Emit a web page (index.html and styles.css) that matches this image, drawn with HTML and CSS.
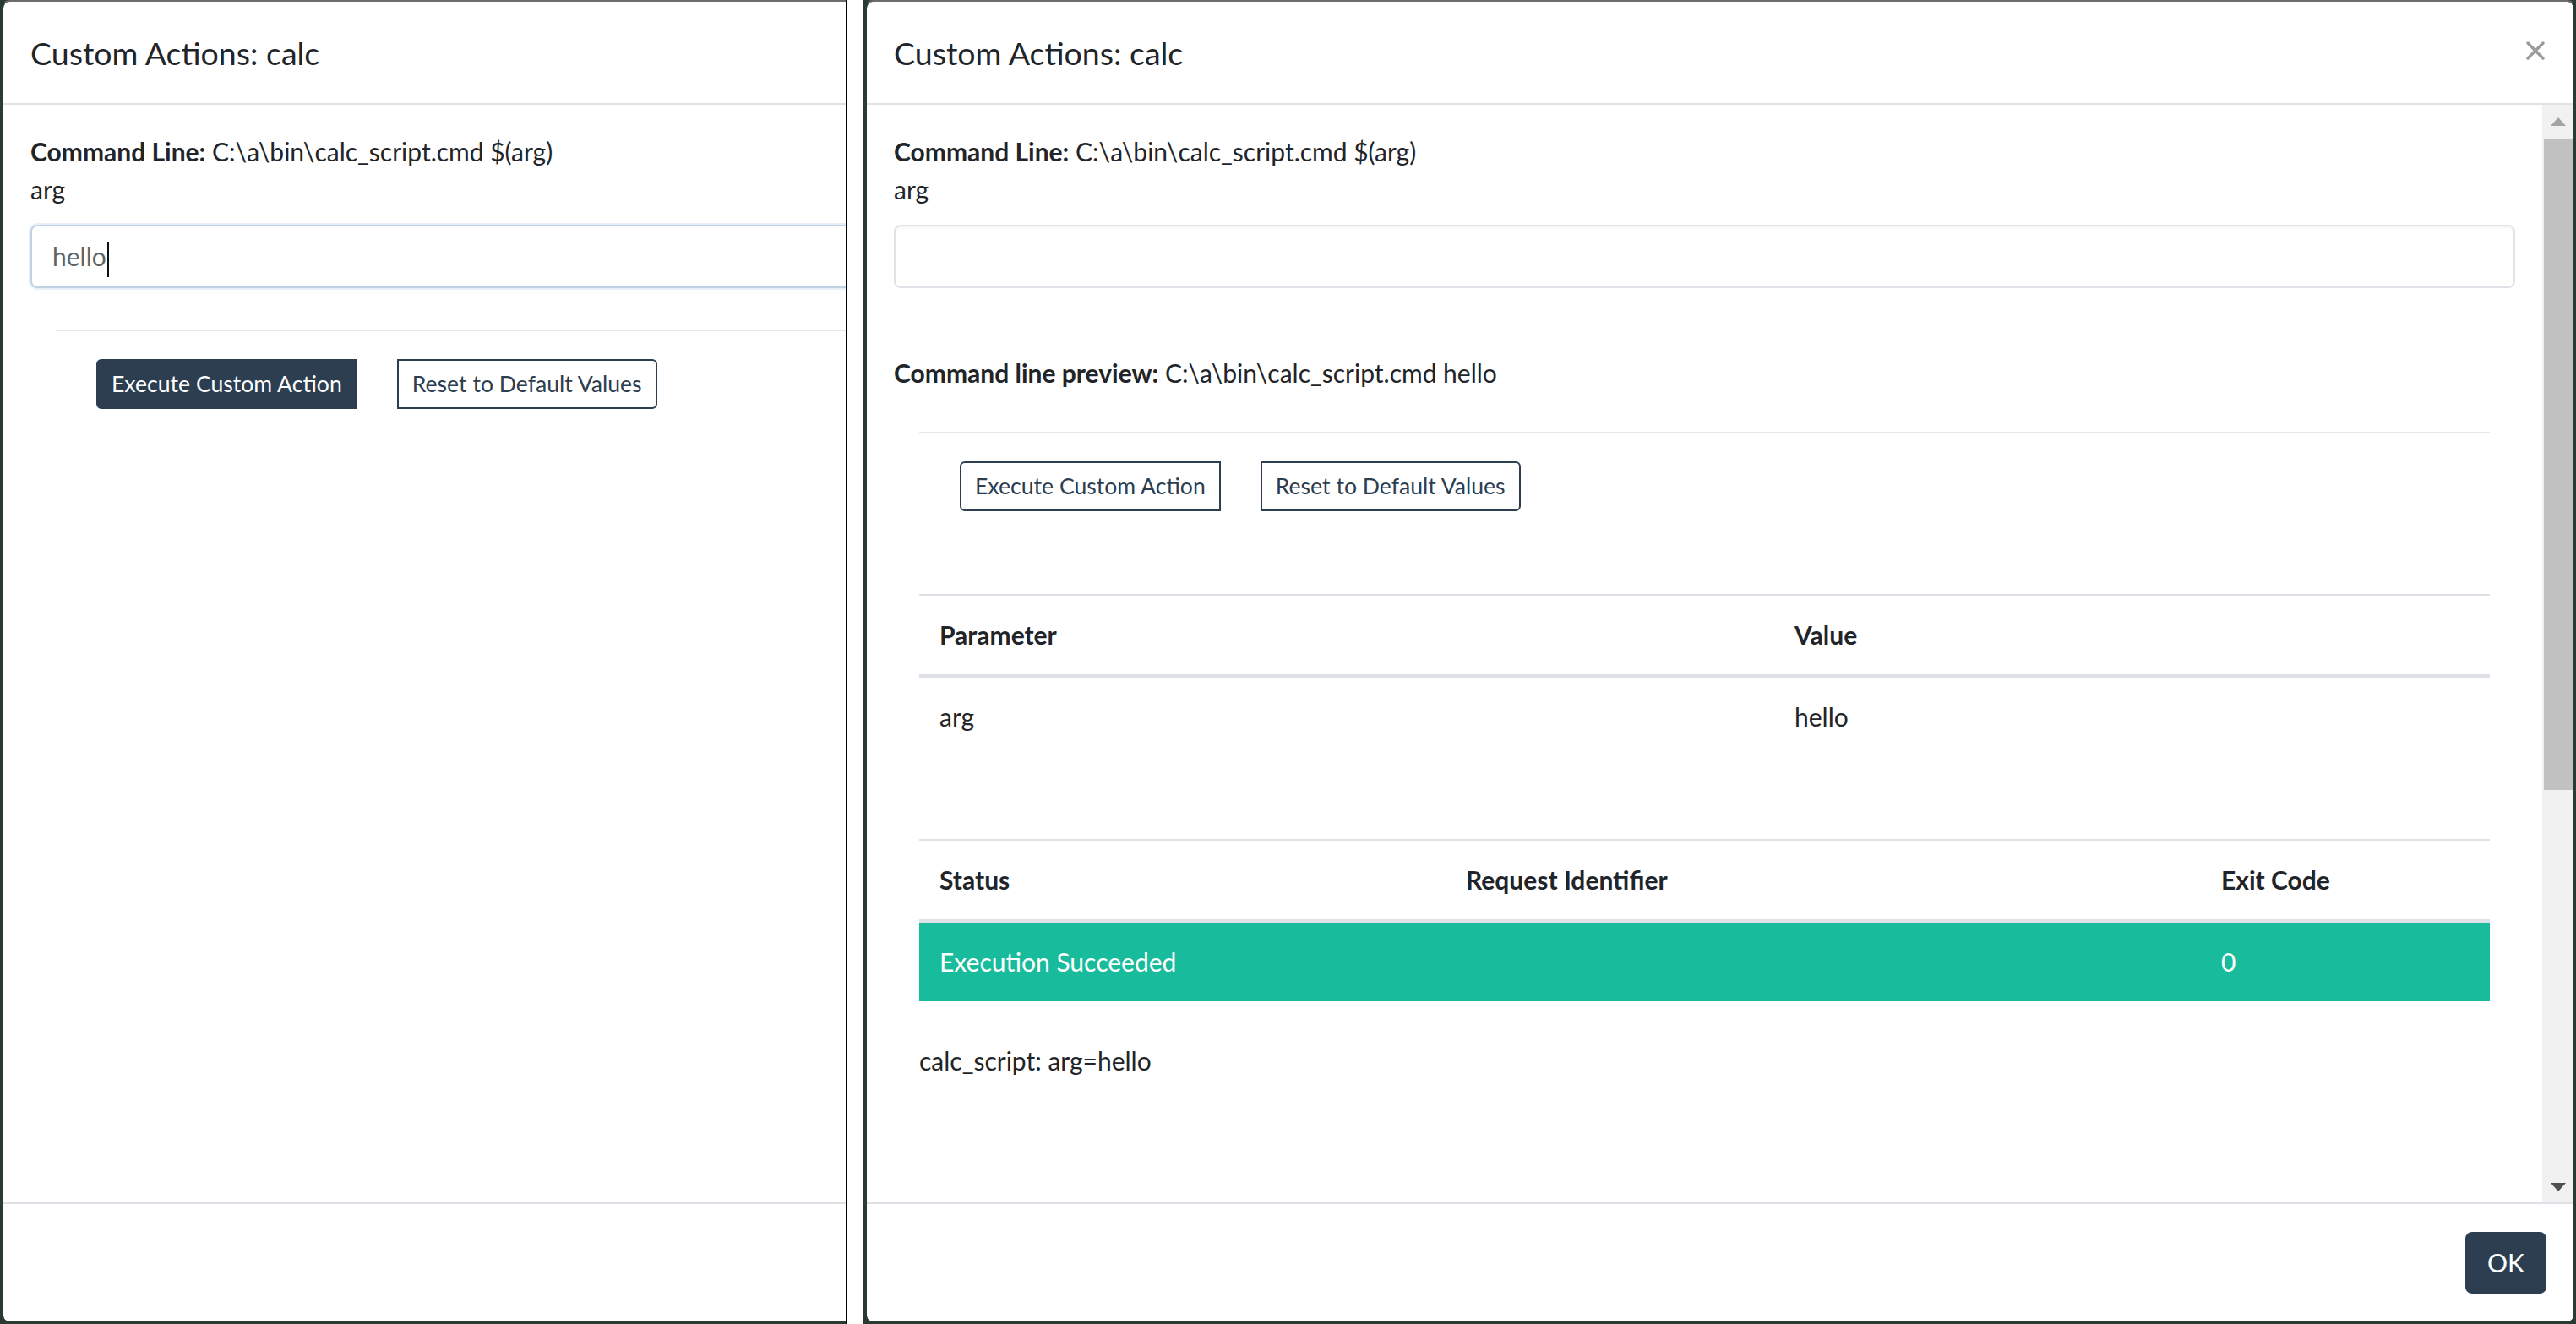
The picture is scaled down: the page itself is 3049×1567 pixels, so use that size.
FILE: index.html
```html
<!DOCTYPE html>
<html lang="en">
<head>
<meta charset="utf-8">
<title>Custom Actions: calc</title>
<link rel="stylesheet" href="styles.css">
</head>
<body>
  <div class="shot shot-left">
    <div class="modal">
      <div class="modal-header">
        <h5 class="modal-title">Custom Actions: calc</h5>
      </div>
      <div class="modal-body">
        <div class="body-content">
          <p class="cmd"><b>Command Line:</b> C:\a\bin\calc_script.cmd $(arg)</p>
          <label class="param-label">arg</label>
          <div class="form-control focused">hello<span class="caret"></span></div>
          <div class="actions actions-left">
            <button class="btn btn-sm btn-solid btn-first">Execute Custom Action</button>
            <button class="btn btn-sm btn-outline btn-last">Reset to Default Values</button>
          </div>
        </div>
      </div>
      <div class="modal-footer"></div>
    </div>
  </div>

  <div class="shot shot-right">
    <div class="modal">
      <div class="modal-header">
        <h5 class="modal-title">Custom Actions: calc</h5>
        <svg class="close-x" width="22" height="22" viewBox="0 0 22 22" aria-label="Close">
          <path d="M2 2 L20 20 M20 2 L2 20" stroke="#9b9b9b" stroke-width="3.4" stroke-linecap="round" fill="none"/>
        </svg>
      </div>
      <div class="modal-body">
        <div class="body-content">
          <p class="cmd"><b>Command Line:</b> C:\a\bin\calc_script.cmd $(arg)</p>
          <label class="param-label">arg</label>
          <div class="form-control"></div>
          <p class="preview"><b>Command line preview:</b> C:\a\bin\calc_script.cmd hello</p>
          <div class="actions actions-right">
            <button class="btn btn-sm btn-outline btn-first">Execute Custom Action</button>
            <button class="btn btn-sm btn-outline btn-last">Reset to Default Values</button>
          </div>
          <div class="results">
            <table class="tbl tbl-params">
              <thead>
                <tr><th class="col-param">Parameter</th><th>Value</th></tr>
              </thead>
              <tbody>
                <tr><td>arg</td><td>hello</td></tr>
              </tbody>
            </table>
            <table class="tbl tbl-status">
              <thead>
                <tr><th class="col-status">Status</th><th class="col-req">Request Identifier</th><th>Exit Code</th></tr>
              </thead>
              <tbody>
                <tr class="row-success"><td>Execution Succeeded</td><td></td><td>0</td></tr>
              </tbody>
            </table>
            <p class="output">calc_script: arg=hello</p>
          </div>
        </div>
        <div class="scrollbar">
          <div class="sb-btn sb-up">
            <svg width="18" height="10" viewBox="0 0 18 10"><path d="M9 0 L18 10 L0 10 Z" fill="#a3a3a3"/></svg>
          </div>
          <div class="sb-thumb"></div>
          <div class="sb-track"></div>
          <div class="sb-btn sb-down">
            <svg width="18" height="10" viewBox="0 0 18 10"><path d="M0 0 L18 0 L9 10 Z" fill="#505050"/></svg>
          </div>
        </div>
      </div>
      <div class="modal-footer">
        <button class="btn btn-solid btn-ok">OK</button>
      </div>
    </div>
  </div>
</body>
</html>
```

FILE: styles.css
```css
* { box-sizing: border-box; }

html, body { margin: 0; padding: 0; }

body {
  width: 3049px;
  height: 1567px;
  display: flex;
  background: #ffffff;
  font-family: Lato, "Noto Sans", sans-serif;
  font-size: 30px;
  line-height: 45px;
  color: #212529;
  overflow: hidden;
}

.shot {
  height: 1567px;
  background: #2a3b31;
  overflow: hidden;
  display: flex;
  padding-left: 1px;
}

.shot-left {
  width: 1002px;
  border-right: 1px solid #000;
}

.shot-right {
  width: 2027px;
  margin-left: 20px;
}

.modal {
  flex: none;
  width: 2026px;
  height: 1567px;
  display: flex;
  flex-direction: column;
  background: #fff;
  background-clip: padding-box;
  border: 3px solid #2a3b31;
  border-top: 2px solid #6c6c6c;
  border-radius: 10px;
}

.modal-header {
  flex: none;
  display: flex;
  align-items: center;
  justify-content: space-between;
  padding: 32px 32px 32px 32px;
  border-bottom: 2px solid #dee2e6;
}

.modal-title {
  margin: 0;
  font-size: 37.5px;
  line-height: 56px;
  font-weight: 400;
  position: relative;
  top: 1px;
}

.close-x {
  margin-right: 2px;
  margin-bottom: 5px;
}

.modal-body {
  flex: 1;
  min-height: 0;
  display: flex;
}

.body-content {
  flex: 1;
  min-width: 0;
  padding: 33px 32px 32px;
  overflow: hidden;
}

.cmd, .preview, .output { margin: 0; }

.param-label { display: block; }

.form-control {
  margin-top: 19px;
  height: 75px;
  border: 2px solid #dfe3e7;
  border-radius: 8px;
  padding: 0 24px;
  line-height: 71px;
  color: #5f6669;
  box-shadow: inset 0 2px 2px rgba(0, 0, 0, 0.04);
}

.form-control.focused {
  border-color: #bed2e6;
  box-shadow: 0 0 0 2px rgba(190, 210, 230, 0.35);
}

.caret {
  display: inline-block;
  width: 2px;
  height: 41px;
  background: #111;
  vertical-align: middle;
  margin-left: 1px;
}

.preview { margin-top: 78px; }

.actions {
  display: flex;
  gap: 47px;
  margin: 0 30px;
  padding: 33px 0 0 48px;
  border-top: 2px solid #e5e7e9;
}

.actions-left { margin-top: 49px; }
.actions-right { margin-top: 47px; }

.btn {
  font-family: Lato, "Noto Sans", sans-serif;
  border: 2px solid #2c3e50;
  cursor: pointer;
}

.btn-sm {
  height: 59px;
  font-size: 26.6px;
  line-height: 39px;
  padding: 8px 16px;
}

.btn-solid { background: #2c3e50; color: #fff; }
.btn-outline { background: #fff; color: #2c3e50; }

.btn-first { border-radius: 6px 0 0 6px; }
.btn-last { border-radius: 0 6px 6px 0; }

.results { margin: 0 30px; }

.tbl {
  width: 100%;
  border-collapse: separate;
  border-spacing: 0;
}

.tbl th, .tbl td {
  padding: 24px;
  text-align: left;
  vertical-align: top;
  line-height: 45px;
}

.tbl th {
  font-weight: 700;
  border-top: 2px solid #dee2e6;
  border-bottom: 4px solid #dee2e6;
}

.tbl-params { margin-top: 98px; }
.tbl-status { margin-top: 98px; }

.col-param { width: 1012px; }
.col-status { width: 623px; }
.col-req { width: 894px; }

.row-success td {
  background: #18bc9c;
  color: #fff;
}

.output { margin-top: 48px; }

.scrollbar {
  flex: none;
  width: 37px;
  background: #f1f1f1;
  display: flex;
  flex-direction: column;
}

.sb-btn {
  display: flex;
  align-items: center;
  justify-content: center;
}

.sb-up { height: 40px; }
.sb-down { height: 36px; }

.sb-thumb {
  height: 771px;
  background: #c1c1c1;
  margin: 0 1px 0 2px;
}

.sb-track { flex: 1; }

.modal-footer {
  flex: none;
  height: 141px;
  display: flex;
  justify-content: flex-end;
  align-items: flex-start;
  padding: 24px;
  border-top: 2px solid #dee2e6;
}

.btn-ok {
  margin: 9px 8px 8px;
  height: 73px;
  padding: 12px 24px;
  font-size: 30px;
  line-height: 45px;
  border-radius: 8px;
}
```
